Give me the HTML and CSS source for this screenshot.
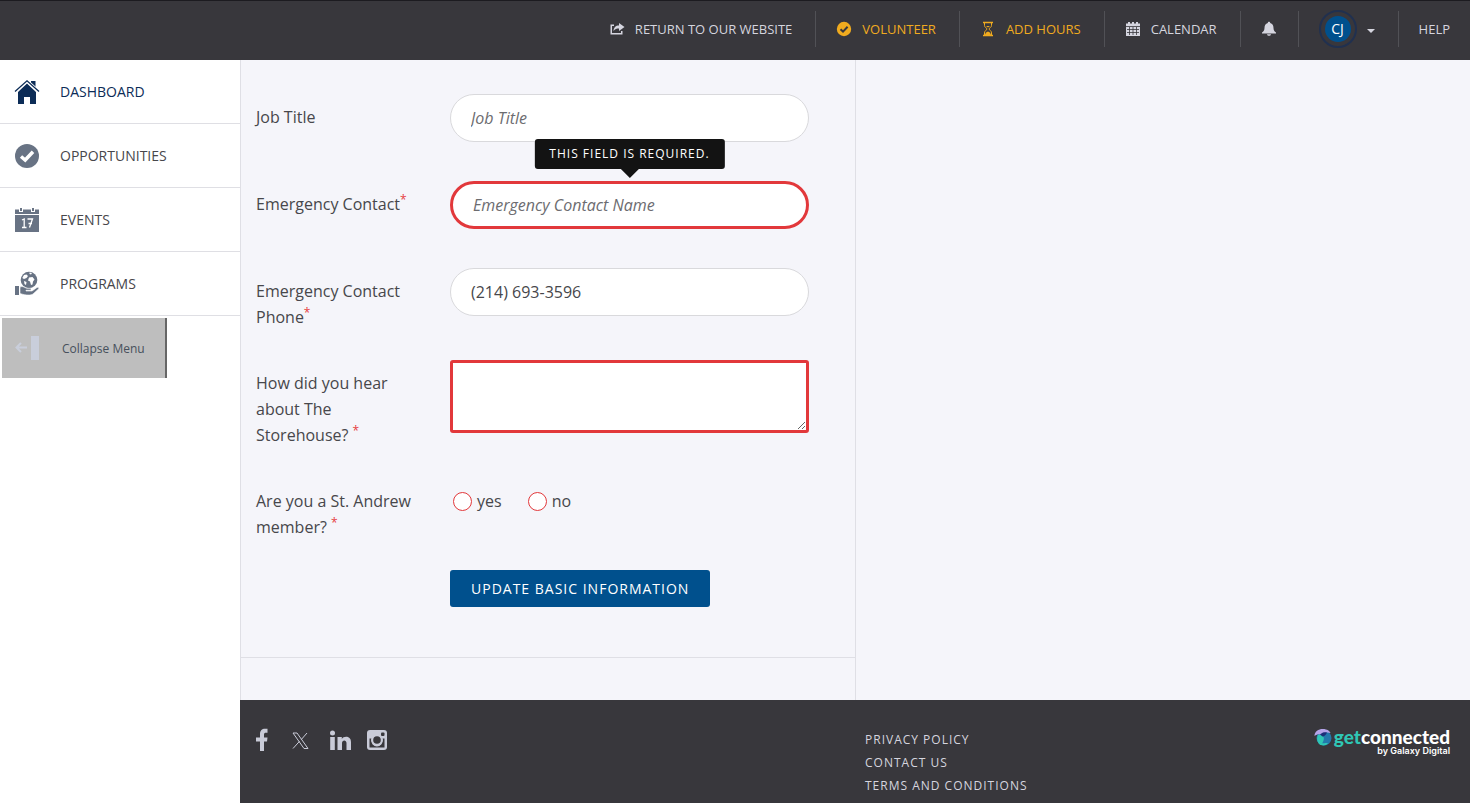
FILE: index.html
```html
<!DOCTYPE html>
<html lang="en">
<head>
    <meta charset="UTF-8">
    <meta name="viewport" content="width=device-width, initial-scale=1.0">
    <title>Basic Information</title>
    <link rel="stylesheet" href="styles.css">
</head>
<body>
    <header class="topbar">
        <nav class="topnav">
            <a href="#" class="topnav-item">
                <svg width="16" height="16" viewBox="0 0 16 16" fill="currentColor"><path d="M5 3.500H1.500V13.500H13.500V10H12V12H3V5H5Z"/><path d="M10 2L15.500 6L10 10V7.500C7.500 7.500 6 8 4.500 10C4.800 6.500 6.500 4.500 10 4.500Z"/></svg>
                <span>RETURN TO OUR WEBSITE</span>
            </a>
            <a href="#" class="topnav-item highlight">
                <svg width="16" height="16" viewBox="0 0 16 16"><circle cx="8" cy="8" r="7.200" fill="currentColor"/><path d="M4.500 8.300L7 10.600L11.600 5.800" fill="none" stroke="#38373c" stroke-width="2"/></svg>
                <span>VOLUNTEER</span>
            </a>
            <a href="#" class="topnav-item highlight">
                <svg width="16" height="16" viewBox="0 0 16 16" fill="none" stroke="currentColor"><path d="M3 1.500H13M3 14.500H13" stroke-width="1.400"/><path d="M4.500 2V4.500C4.500 6.500 7 7 7 8C7 9 4.500 9.500 4.500 12V14M11.500 2V4.500C11.500 6.500 9 7 9 8C9 9 11.500 9.500 11.500 12V14"/><path d="M5 14C5 11.500 8 10.500 8 10.500C8 10.500 11 11.500 11 14ZM6 5H10L8 6.500Z" fill="currentColor" stroke="none"/></svg>
                <span>ADD HOURS</span>
            </a>
            <a href="#" class="topnav-item">
                <svg width="16" height="16" viewBox="0 0 16 16"><path d="M1 2.500H3V1H5V2.500H7V1H9V2.500H11V1H13V2.500H15V15H1Z" fill="currentColor"/><path d="M1 5.500H15M2 8.500H14M2 11.500H14M4.500 6V14M8 6V14M11.500 6V14" stroke="#38373c" stroke-width=".8"/></svg>
                <span>CALENDAR</span>
            </a>
            <a href="#" class="topnav-item bell" aria-label="Notifications">
                <svg width="16" height="16" viewBox="0 0 16 16" fill="currentColor"><path d="M8 .8C8.700 .8 9.200 1.300 9.200 2C11.500 2.600 12.500 4.500 12.500 7C12.500 9.500 13.500 10.500 15 11.500V12.500H1V11.500C2.500 10.500 3.500 9.500 3.500 7C3.500 4.500 4.500 2.600 6.800 2C6.800 1.300 7.300 .8 8 .8Z"/><path d="M6 13.200H10C9.700 15.300 6.300 15.300 6 13.200Z"/></svg>
            </a>
            <a href="#" class="topnav-item profile">
                <span class="avatar">CJ</span>
                <span class="caret"></span>
            </a>
            <a href="#" class="topnav-item">HELP</a>
        </nav>
    </header>

    <div class="page">
        <aside class="sidebar">
            <nav>
                <a href="#" class="side-item active">
                    <svg width="26" height="26" viewBox="0 0 26 26"><path d="M4 13L13 4.500L22 13V25H16V18H10V25H4Z" fill="currentColor"/><path d="M17 2H21.500V9L17 5Z" fill="currentColor"/><path d="M1 12.500L13 1.800L25 12.500" fill="none" stroke="#fff" stroke-width="3"/><path d="M1 12.500L13 1.800L25 12.500" fill="none" stroke="currentColor" stroke-width="1.300"/></svg>
                    <span>DASHBOARD</span>
                </a>
                <a href="#" class="side-item">
                    <svg width="26" height="26" viewBox="0 0 26 26"><circle cx="13" cy="13" r="12" fill="currentColor"/><path d="M7 13.500L11.200 17L19 8.800" fill="none" stroke="#fff" stroke-width="3.500"/></svg>
                    <span>OPPORTUNITIES</span>
                </a>
                <a href="#" class="side-item">
                    <svg width="26" height="26" viewBox="0 0 26 26"><path d="M1 2.500H25V25H1Z" fill="currentColor"/><path d="M1 7.500H25" stroke="#fff"/><path d="M5 1H9V5H5ZM17 1H21V5H17Z" fill="#fff"/><path d="M6 1H8V4H6ZM18 1H20V4H18Z" fill="currentColor"/><path d="M8 13L10.200 12V20.500M8 20.500H12.500M13.500 12H18.500L15.500 20.500M14.500 16.500H18" fill="none" stroke="#fff" stroke-width="1.300"/></svg>
                    <span>EVENTS</span>
                </a>
                <a href="#" class="side-item">
                    <svg width="26" height="26" viewBox="0 0 26 26"><circle cx="15" cy="9" r="8.300" fill="currentColor"/><path d="M8.300 7L10 4L12.500 3.500L14 5L12.500 7L10 8ZM15.500 1.500L18 2L17 3.500L15.500 3ZM15 6.500L18.500 6L20.500 8.500L19 10.500L18.500 13.500L17 14L16 10.500L14 9.500ZM10 10L12.500 11L12 14L10.500 13Z" fill="#fff"/><path d="M1 15H5V24H1Z" fill="currentColor"/><path d="M6 16C9 14.500 11 17 13 17.300H17V19.200H12V20H18L23 16.500C24.500 16 25.500 17 24.500 18L19 23C17 24.500 12 24.500 6 22.500Z" fill="currentColor" stroke="#fff" stroke-width=".6"/></svg>
                    <span>PROGRAMS</span>
                </a>
            </nav>
            <button type="button" class="collapse-btn">
                <svg width="24" height="24" viewBox="0 0 24 24"><path d="M12 11.500H1.500M6 7L1.500 11.500L6 16" fill="none" stroke="currentColor" stroke-width="2"/><path d="M16 0H24V24H16Z" fill="currentColor"/></svg>
                <span>Collapse Menu</span>
            </button>
        </aside>

        <div class="main">
            <div class="content">
                <div class="column">
                    <form class="info-form" novalidate>
                        <div class="form-row">
                            <label for="jobTitle">Job Title</label>
                            <div class="field">
                                <input type="text" id="jobTitle" placeholder="Job Title">
                            </div>
                        </div>

                        <div class="form-row">
                            <label for="contactName">Emergency Contact<sup>*</sup></label>
                            <div class="field">
                                <input type="text" id="contactName" class="error" placeholder="Emergency Contact Name" aria-describedby="contactError" required>
                                <div class="tooltip" id="contactError" role="tooltip">THIS FIELD IS REQUIRED.</div>
                            </div>
                        </div>

                        <div class="form-row">
                            <label for="contactPhone">Emergency Contact Phone<sup>*</sup></label>
                            <div class="field">
                                <input type="tel" id="contactPhone" value="(214) 693-3596" required>
                            </div>
                        </div>

                        <div class="form-row">
                            <label for="hear">How did you hear about The Storehouse? <sup>*</sup></label>
                            <div class="field">
                                <textarea id="hear" class="error" required></textarea>
                            </div>
                        </div>

                        <div class="form-row" role="radiogroup" aria-labelledby="memberLabel">
                            <span class="row-label" id="memberLabel">Are you a St. Andrew member? <sup>*</sup></span>
                            <div class="field radios">
                                <label><input type="radio" name="member" value="yes">yes</label>
                                <label><input type="radio" name="member" value="no">no</label>
                            </div>
                        </div>

                        <div class="form-row">
                            <div class="field actions">
                                <button type="submit" class="submit-btn">UPDATE BASIC INFORMATION</button>
                            </div>
                        </div>
                    </form>
                </div>
                <div class="column"></div>
            </div>

            <footer class="footer">
                <div class="social">
                    <a href="#" aria-label="Facebook"><svg width="22" height="24" viewBox="0 0 22 24" fill="currentColor"><path d="M5 23V13.500H1V9.500H5V6.500C5 2.500 7 .8 10 .8H12.500V4.700H11C9.600 4.700 9 5.300 9 6.700V9.500H12.500L12 13.500H9V23Z"/></svg></a>
                    <a href="#" aria-label="X"><svg width="22" height="24" viewBox="0 0 22 24" fill="none" stroke="currentColor"><path d="M1 5H5L16 20.500H12Z"/><path d="M15 5L9.300 11.500M7.500 13.300L1 20.500"/></svg></a>
                    <a href="#" aria-label="LinkedIn"><svg width="22" height="24" viewBox="0 0 22 24" fill="currentColor"><circle cx="3.500" cy="5" r="2.500"/><path d="M1.200 9H5.800V22H1.200ZM8.500 9H12.800V11C14.500 7.800 22 7.500 22 14V22H17.500V15C17.500 11.500 13 11.500 13 15V22H8.500Z"/></svg></a>
                    <a href="#" aria-label="Instagram"><svg width="22" height="24" viewBox="0 0 22 24"><rect x="1" y="2" width="20" height="20" rx="3" fill="currentColor"/><path d="M3.500 10.500H6C3.500 21 18.500 21 16 10.500H18.500V19.500H3.500Z" fill="#38373c"/><circle cx="11" cy="12" r="6" fill="currentColor"/><circle cx="11" cy="12" r="3.800" fill="#38373c"/><rect x="15" y="4.500" width="3.500" height="3.500" rx="1" fill="#38373c"/></svg></a>
                </div>
                <div class="footer-right">
                    <ul class="footer-links">
                        <li><a href="#">PRIVACY POLICY</a></li>
                        <li><a href="#">CONTACT US</a></li>
                        <li><a href="#">TERMS AND CONDITIONS</a></li>
                    </ul>
                    <a href="#" class="brand">
                        <span class="brand-name">
                            <svg width="18" height="18" viewBox="0 0 18 18"><circle cx="10" cy="10" r="7.500" fill="#2478ac"/><path d="M4 7C8 6 11 9 9.500 12.500C9 14 8 16 6.500 17C3.500 15 2 11 4 7Z" fill="#2fc6b5"/><path d="M5 15C9 16 13 14 14 15.500C11.500 18 7 18.500 5 15Z" fill="#2fc6b5"/><path d="M.5 8C.5 2 7 0 12 1.500C14.500 2 16 3.500 16.500 5C12 3.500 9 5.500 8.500 7C5.500 5.500 3 6 .5 8Z" fill="#b5a4e8"/><path d="M6 6.500C8.500 4 11 4 13 4.500C12 7 10 8.500 8.500 8.500Z" fill="#1c2f78"/></svg>
                            <span><b>get</b>connected</span>
                        </span>
                        <span class="brand-by">by Galaxy Digital</span>
                    </a>
                </div>
            </footer>
        </div>
    </div>
</body>
</html>
```
FILE: styles.css
```css
* {
    margin: 0;
    padding: 0;
    box-sizing: border-box;
}

body {
    min-height: 100vh;
    display: flex;
    flex-direction: column;
    font-family: "Open Sans", "Noto Sans", sans-serif;
    font-size: 16px;
    line-height: 26px;
    color: #47474b;
    background-color: #f5f5fa;
}

a {
    color: inherit;
    text-decoration: none;
}

svg {
    display: block;
    flex-shrink: 0;
}

/* top bar */
.topbar {
    height: 60px;
    padding-bottom: 3px;
    background-color: #38373c;
    border-top: 1px solid #1c1b20;
}

.topnav {
    height: 100%;
    display: flex;
    justify-content: flex-end;
    align-items: center;
}

.topnav-item {
    height: 36px;
    display: flex;
    align-items: center;
    gap: 10px;
    padding: 0 23px 0 20px;
    border-right: 1px solid #515156;
    font-size: 13px;
    color: #d5d5df;
}

.topnav-item:last-child {
    border-right: none;
    padding-right: 20px;
}

.topnav-item.highlight {
    color: #f0ab1f;
}

.topnav-item.bell {
    padding-right: 21px;
}

.topnav-item.profile {
    gap: 10px;
}

.avatar {
    width: 38px;
    height: 38px;
    display: flex;
    align-items: center;
    justify-content: center;
    border-radius: 50%;
    border: 2px solid #20304f;
    background: #00508d content-box;
    padding: 4px;
    font-size: 14px;
    color: #fff;
}

.caret {
    border: 4px solid transparent;
    border-top-color: #d5d5df;
    border-bottom: none;
    margin-top: 4px;
}

/* sidebar */
.page {
    flex: 1;
    display: flex;
}

.sidebar {
    width: 240px;
    flex-shrink: 0;
    background-color: #fff;
}

.side-item {
    height: 64px;
    display: flex;
    align-items: center;
    gap: 20px;
    padding: 0 14px;
    border-bottom: 1px solid #dfdfe4;
    font-size: 14px;
    color: #47474b;
}

.side-item svg {
    color: #687384;
}

.side-item.active,
.side-item.active svg {
    color: #0c2c57;
}

.collapse-btn {
    display: flex;
    align-items: center;
    gap: 23px;
    height: 60px;
    margin: 2px;
    padding: 0 20px 0 13px;
    border: none;
    border-right: 2px solid #666;
    background-color: #bebebe;
    font-family: inherit;
    font-size: 12px;
    color: #47505c;
}

.collapse-btn svg {
    color: #c9cedb;
}

/* content */
.main {
    flex: 1;
    display: flex;
    flex-direction: column;
}

.content {
    display: grid;
    grid-template-columns: 1fr 1fr;
}

.column {
    border-left: 1px solid #dfdfe5;
}

.info-form {
    display: flex;
    flex-direction: column;
    gap: 30px;
    margin-bottom: 42px;
    padding: 34px 46px 50px 15px;
    border-bottom: 1px solid #dfdfe5;
}

.form-row {
    display: grid;
    grid-template-columns: 160px 1fr;
    column-gap: 34px;
}

.form-row > label,
.row-label {
    padding-top: 10px;
}

sup {
    font-size: 12px;
    line-height: 0;
    color: #e63c3e;
}

.field {
    position: relative;
}

.field input[type="text"],
.field input[type="tel"],
textarea {
    display: block;
    width: 100%;
    height: 48px;
    margin-bottom: 9px;
    padding: 0 20px;
    border: 1px solid #d9d9dc;
    border-radius: 24px;
    background-color: #fff;
    font-family: inherit;
    font-size: 16px;
    color: #47474b;
}

.field input::placeholder {
    font-style: italic;
    color: #6c6c70;
}

.field textarea {
    height: 73px;
    border-radius: 3px;
    resize: vertical;
}

.field .error.error {
    border: 3px solid #e2383b;
}

.tooltip {
    position: absolute;
    left: 50%;
    bottom: 69px;
    transform: translateX(-50%);
    padding: 2px 15px;
    border-radius: 3px;
    background-color: #131313;
    font-size: 12px;
    letter-spacing: 1px;
    color: #fff;
    white-space: nowrap;
}

.tooltip::after {
    content: "";
    position: absolute;
    top: 100%;
    left: 50%;
    margin-left: -9px;
    border: 9px solid transparent;
    border-top-color: #131313;
    border-bottom: none;
}

.radios {
    display: flex;
    align-items: flex-start;
    gap: 26px;
    padding: 10px 3px;
}

.radios label {
    display: flex;
    align-items: center;
    gap: 5px;
}

.radios input {
    appearance: none;
    width: 19px;
    height: 19px;
    border: 1px solid #e2383b;
    border-radius: 50%;
    background-color: #fff;
}

.actions {
    grid-column: 2;
}

.submit-btn {
    display: block;
    height: 37px;
    padding: 0 21px;
    border: none;
    border-radius: 3px;
    background-color: #00508d;
    font-family: inherit;
    font-size: 14px;
    letter-spacing: 1px;
    color: #fff;
    cursor: pointer;
}

/* footer */
.footer {
    flex: 1;
    display: grid;
    grid-template-columns: 1fr 1fr;
    background-color: #38373c;
    color: #d5d5df;
}

.social {
    display: flex;
    gap: 15px;
    padding: 28px 15px 0;
}

.social svg {
    color: #c9cbd8;
}

.footer-right {
    display: flex;
    justify-content: space-between;
    align-items: flex-start;
    padding: 28px 20px 5px 10px;
}

.footer-links {
    list-style: none;
    font-size: 12px;
    line-height: 23px;
    letter-spacing: 1px;
}

.brand {
    display: flex;
    flex-direction: column;
    align-items: flex-end;
    color: #fff;
}

.brand-name {
    display: flex;
    align-items: center;
    gap: 2px;
    font-family: Lato, sans-serif;
    font-weight: 900;
    font-size: 19px;
    line-height: 16px;
}

.brand-name b {
    color: #2fc6b5;
}

.brand-by {
    font-family: Inter, sans-serif;
    font-weight: 600;
    font-size: 9px;
    line-height: 9px;
}
```
